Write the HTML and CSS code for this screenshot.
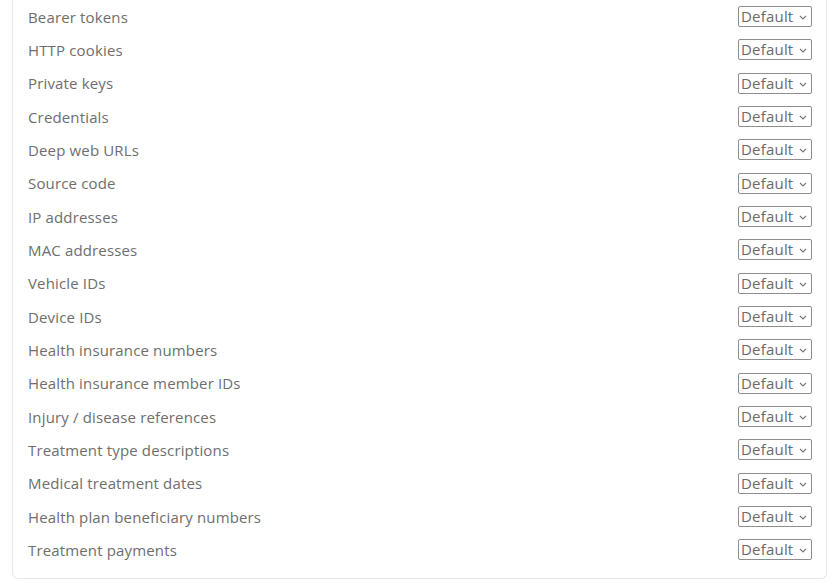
FILE: index.html
```html
<!DOCTYPE html>
<html lang="en">
<head>
<meta charset="utf-8">
<title>Data types</title>
<link rel="stylesheet" href="styles.css">
</head>
<body>
<div class="panel">
  <ul class="types">
    <li class="type"><span class="label">Bearer tokens</span><label class="pick"><select><option>Default</option></select><svg class="chev" viewBox="0 0 8 5"><path d="M1 1l3 3 3-3"/></svg></label></li>
    <li class="type"><span class="label">HTTP cookies</span><label class="pick"><select><option>Default</option></select><svg class="chev" viewBox="0 0 8 5"><path d="M1 1l3 3 3-3"/></svg></label></li>
    <li class="type"><span class="label">Private keys</span><label class="pick"><select><option>Default</option></select><svg class="chev" viewBox="0 0 8 5"><path d="M1 1l3 3 3-3"/></svg></label></li>
    <li class="type"><span class="label">Credentials</span><label class="pick"><select><option>Default</option></select><svg class="chev" viewBox="0 0 8 5"><path d="M1 1l3 3 3-3"/></svg></label></li>
    <li class="type"><span class="label">Deep web URLs</span><label class="pick"><select><option>Default</option></select><svg class="chev" viewBox="0 0 8 5"><path d="M1 1l3 3 3-3"/></svg></label></li>
    <li class="type"><span class="label">Source code</span><label class="pick"><select><option>Default</option></select><svg class="chev" viewBox="0 0 8 5"><path d="M1 1l3 3 3-3"/></svg></label></li>
    <li class="type"><span class="label">IP addresses</span><label class="pick"><select><option>Default</option></select><svg class="chev" viewBox="0 0 8 5"><path d="M1 1l3 3 3-3"/></svg></label></li>
    <li class="type"><span class="label">MAC addresses</span><label class="pick"><select><option>Default</option></select><svg class="chev" viewBox="0 0 8 5"><path d="M1 1l3 3 3-3"/></svg></label></li>
    <li class="type"><span class="label">Vehicle IDs</span><label class="pick"><select><option>Default</option></select><svg class="chev" viewBox="0 0 8 5"><path d="M1 1l3 3 3-3"/></svg></label></li>
    <li class="type"><span class="label">Device IDs</span><label class="pick"><select><option>Default</option></select><svg class="chev" viewBox="0 0 8 5"><path d="M1 1l3 3 3-3"/></svg></label></li>
    <li class="type"><span class="label">Health insurance numbers</span><label class="pick"><select><option>Default</option></select><svg class="chev" viewBox="0 0 8 5"><path d="M1 1l3 3 3-3"/></svg></label></li>
    <li class="type"><span class="label">Health insurance member IDs</span><label class="pick"><select><option>Default</option></select><svg class="chev" viewBox="0 0 8 5"><path d="M1 1l3 3 3-3"/></svg></label></li>
    <li class="type"><span class="label">Injury / disease references</span><label class="pick"><select><option>Default</option></select><svg class="chev" viewBox="0 0 8 5"><path d="M1 1l3 3 3-3"/></svg></label></li>
    <li class="type"><span class="label">Treatment type descriptions</span><label class="pick"><select><option>Default</option></select><svg class="chev" viewBox="0 0 8 5"><path d="M1 1l3 3 3-3"/></svg></label></li>
    <li class="type"><span class="label">Medical treatment dates</span><label class="pick"><select><option>Default</option></select><svg class="chev" viewBox="0 0 8 5"><path d="M1 1l3 3 3-3"/></svg></label></li>
    <li class="type"><span class="label">Health plan beneficiary numbers</span><label class="pick"><select><option>Default</option></select><svg class="chev" viewBox="0 0 8 5"><path d="M1 1l3 3 3-3"/></svg></label></li>
    <li class="type"><span class="label">Treatment payments</span><label class="pick"><select><option>Default</option></select><svg class="chev" viewBox="0 0 8 5"><path d="M1 1l3 3 3-3"/></svg></label></li>
  </ul>
</div>
</body>
</html>
```
FILE: styles.css
```css
html, body {
  margin: 0;
  padding: 0;
  background: #fff;
}

body {
  font-family: "Open Sans", "Liberation Sans", sans-serif;
  color: #6e6e6e;
  padding: 0 9px 0 12px;
}

.panel {
  border: 1px solid #e8e8e8;
  border-top: 0;
  border-radius: 0 0 6px 6px;
  padding: 0 14px 11px 15px;
}

.types {
  list-style: none;
  margin: 0;
  padding: 0;
}

.type {
  height: 33.333px;
  display: flex;
  align-items: center;
  justify-content: space-between;
}

.label {
  font-size: 15px;
  letter-spacing: 0.15px;
}

.pick {
  display: inline-flex;
  align-items: center;
  height: 19px;
  width: 72px;
  border: 1px solid #8e8e8e;
  border-radius: 2px;
  box-sizing: content-box;
  padding: 0;
}

.pick select {
  appearance: none;
  -webkit-appearance: none;
  border: 0;
  background: transparent;
  font: inherit;
  font-size: 15px;
  letter-spacing: 0.2px;
  color: #6a6a6a;
  padding: 0 0 0 2px;
  margin: 0;
  width: 60px;
  height: 19px;
  line-height: 19px;
  outline: none;
}

.chev {
  width: 8px;
  height: 5px;
  margin: 2px 0 0 0;
  fill: none;
  stroke: #777;
  stroke-width: 1.1;
}
```
